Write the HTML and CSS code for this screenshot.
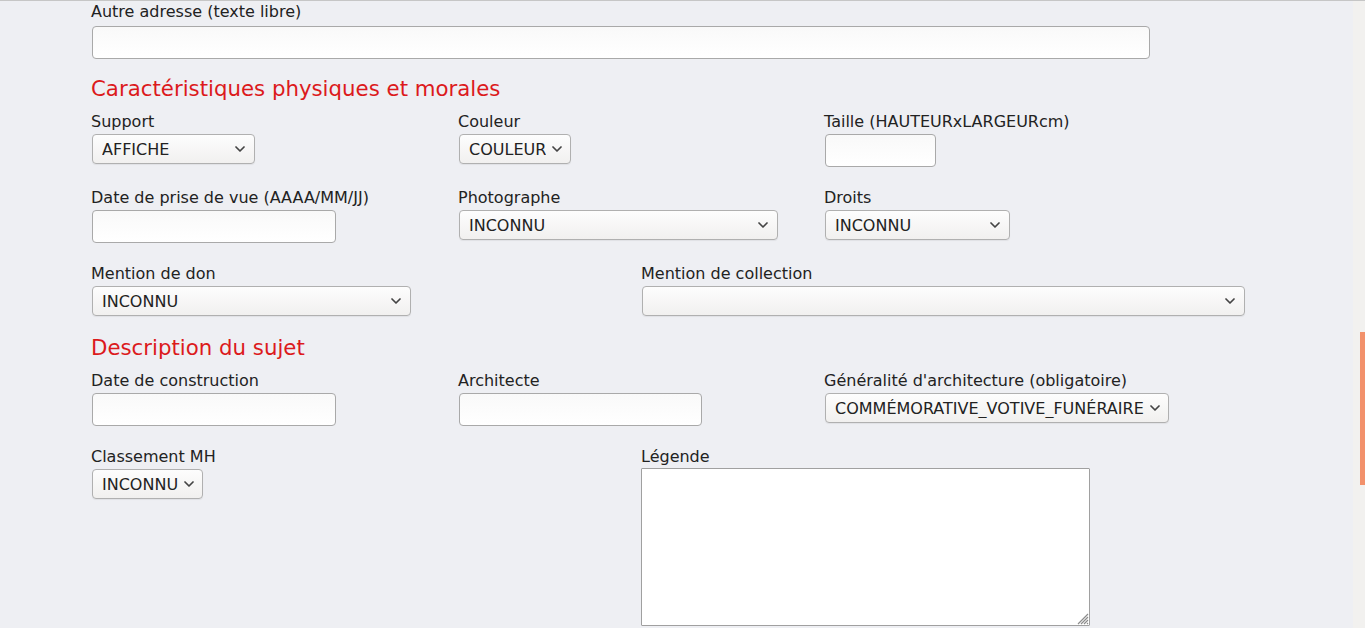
FILE: index.html
```html
<!DOCTYPE html>
<html lang="fr">
<head>
<meta charset="utf-8">
<title>Formulaire</title>
<link rel="stylesheet" href="styles.css">
</head>
<body>
<div class="page">
  <div class="row">
    <div class="field">
      <label class="lbl lbl-first">Autre adresse (texte libre)</label>
      <input class="inp w-autre" type="text">
    </div>
  </div>

  <h2 class="section-title first">Caractéristiques physiques et morales</h2>

  <div class="row cols3">
    <div class="field">
      <label class="lbl">Support</label>
      <span class="sel w-support"><select><option>AFFICHE</option></select><svg class="chev" viewBox="0 0 10 6"><path d="M1 1l4 4 4-4"/></svg></span>
    </div>
    <div class="field">
      <label class="lbl">Couleur</label>
      <span class="sel w-couleur"><select><option>COULEUR</option></select><svg class="chev" viewBox="0 0 10 6"><path d="M1 1l4 4 4-4"/></svg></span>
    </div>
    <div class="field">
      <label class="lbl">Taille (HAUTEURxLARGEURcm)</label>
      <input class="inp w-taille" type="text">
    </div>
  </div>

  <div class="row cols3">
    <div class="field">
      <label class="lbl">Date de prise de vue (AAAA/MM/JJ)</label>
      <input class="inp w-date" type="text">
    </div>
    <div class="field">
      <label class="lbl">Photographe</label>
      <span class="sel w-photo"><select><option>INCONNU</option></select><svg class="chev" viewBox="0 0 10 6"><path d="M1 1l4 4 4-4"/></svg></span>
    </div>
    <div class="field">
      <label class="lbl">Droits</label>
      <span class="sel w-droits"><select><option>INCONNU</option></select><svg class="chev" viewBox="0 0 10 6"><path d="M1 1l4 4 4-4"/></svg></span>
    </div>
  </div>

  <div class="row cols2">
    <div class="field">
      <label class="lbl">Mention de don</label>
      <span class="sel w-don"><select><option>INCONNU</option></select><svg class="chev" viewBox="0 0 10 6"><path d="M1 1l4 4 4-4"/></svg></span>
    </div>
    <div class="field">
      <label class="lbl">Mention de collection</label>
      <span class="sel w-collection"><select><option></option></select><svg class="chev" viewBox="0 0 10 6"><path d="M1 1l4 4 4-4"/></svg></span>
    </div>
  </div>

  <h2 class="section-title second">Description du sujet</h2>

  <div class="row cols3">
    <div class="field">
      <label class="lbl">Date de construction</label>
      <input class="inp w-date" type="text">
    </div>
    <div class="field">
      <label class="lbl">Architecte</label>
      <input class="inp w-archi" type="text">
    </div>
    <div class="field">
      <label class="lbl">Généralité d'architecture (obligatoire)</label>
      <span class="sel w-gen"><select><option>COMMÉMORATIVE_VOTIVE_FUNÉRAIRE</option></select><svg class="chev" viewBox="0 0 10 6"><path d="M1 1l4 4 4-4"/></svg></span>
    </div>
  </div>

  <div class="row cols2">
    <div class="field">
      <label class="lbl">Classement MH</label>
      <span class="sel w-classement"><select><option>INCONNU</option></select><svg class="chev" viewBox="0 0 10 6"><path d="M1 1l4 4 4-4"/></svg></span>
    </div>
    <div class="field">
      <label class="lbl lbl-legende">Légende</label>
      <span class="txt-wrap">
        <textarea class="txt"></textarea>
        <svg class="grip" viewBox="0 0 12 12"><path d="M11 1L1 11M11 4L4 11M11 7L7 11M11 10L10 11"/></svg>
      </span>
    </div>
  </div>
</div>

<div class="scrollbar"><div class="thumb"></div></div>
</body>
</html>
```

FILE: styles.css
```css
html, body {
  margin: 0;
  padding: 0;
  overflow: hidden;
  height: 100%;
}

body {
  background: #eeeff3;
  font-family: "DejaVu Sans", "Noto Sans", sans-serif;
  font-size: 16px;
  color: #222;
  border-top: 1px solid #c6c6c6;
  box-sizing: border-box;
}

.page {
  padding: 1px 0 0 92px;
}

.row {
  display: grid;
  align-items: start;
}

.row + .row {
  margin-top: 21px;
}

.cols3 {
  grid-template-columns: 367px 366px 1fr;
}

.cols2 {
  grid-template-columns: 550px 1fr;
}

.field {
  display: flex;
  flex-direction: column;
  align-items: flex-start;
}

.lbl {
  display: block;
  line-height: 19px;
  margin-bottom: 3px;
  margin-left: -1px;
}

.lbl-first {
  margin-bottom: 5px;
}

.section-title {
  margin: 17px 0 11px -1px;
  font-size: 21.3px;
  line-height: 25px;
  font-weight: normal;
  color: #dc1a1c;
}

.section-title.second {
  margin-top: 19px;
  margin-bottom: 11px;
}

.inp {
  box-sizing: border-box;
  height: 33px;
  margin: 0;
  padding: 0 9px;
  border: 1px solid #a9a9a9;
  border-radius: 4px;
  background: linear-gradient(#f9f9f9, #ffffff);
  font: inherit;
  color: #222;
  outline: none;
}

.sel {
  position: relative;
  display: inline-block;
  height: 30px;
}

.sel select {
  box-sizing: border-box;
  width: 100%;
  height: 30px;
  margin: 0;
  padding: 0 24px 0 9px;
  border: 1px solid #b0b0b0;
  border-radius: 4px;
  background: linear-gradient(#fdfdfd, #f1f0ef);
  box-shadow: 0 1px 1px rgba(0, 0, 0, 0.06);
  font: inherit;
  color: #222;
  -webkit-appearance: none;
  appearance: none;
  outline: none;
}

.chev {
  position: absolute;
  right: 10px;
  top: 12px;
  width: 10px;
  height: 6px;
  pointer-events: none;
}

.chev path {
  fill: none;
  stroke: #444;
  stroke-width: 1.7;
  stroke-linecap: round;
  stroke-linejoin: round;
}

.w-autre { width: 1058px; }
.w-support { width: 163px; }
.w-couleur { width: 112px; }
.w-taille { width: 111px; }
.w-date { width: 244px; }
.w-photo { width: 319px; }
.w-droits { width: 185px; }
.w-don { width: 319px; }
.w-collection { width: 603px; }
.w-archi { width: 243px; }
.w-gen { width: 344px; }
.w-classement { width: 111px; }

.w-couleur .chev,
.w-gen .chev,
.w-classement .chev {
  right: 9px;
}

.txt-wrap {
  position: relative;
  display: block;
  width: 449px;
  height: 158px;
  margin: -1px 0 0 -1px;
}

.txt {
  display: block;
  box-sizing: border-box;
  width: 449px;
  height: 158px;
  margin: 0;
  border: 1px solid #a0a0a0;
  border-radius: 1px;
  background: #fff;
  font: inherit;
  resize: none;
  outline: none;
}

.grip {
  position: absolute;
  right: 1px;
  bottom: 1px;
  width: 12px;
  height: 12px;
  pointer-events: none;
}

.grip path {
  fill: none;
  stroke: #8c8c8c;
  stroke-width: 1.2;
}

.scrollbar {
  position: fixed;
  top: 1px;
  right: 0;
  bottom: 0;
  width: 12px;
  background: #f2f1ef;
}

.thumb {
  position: absolute;
  top: 331px;
  right: 0;
  width: 5px;
  height: 153px;
  background: #f2916b;
}
```
